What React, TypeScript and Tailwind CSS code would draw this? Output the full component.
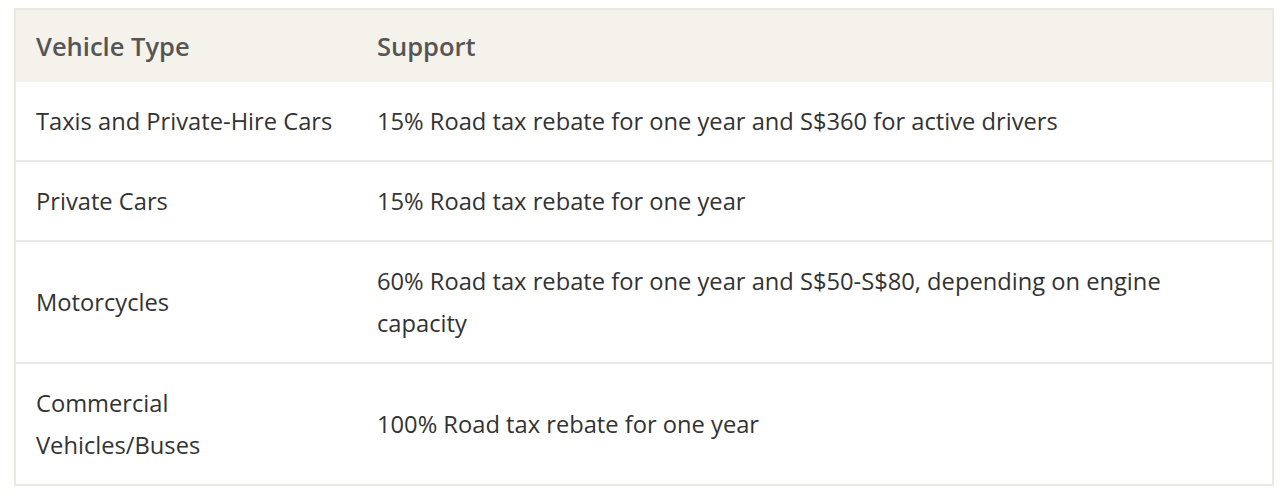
import React from "react";

type Row = {
  type: string;
  support: string;
};

const rows: Row[] = [
  {
    type: "Taxis and Private-Hire Cars",
    support: "15% Road tax rebate for one year and S$360 for active drivers",
  },
  { type: "Private Cars", support: "15% Road tax rebate for one year" },
  {
    type: "Motorcycles",
    support:
      "60% Road tax rebate for one year and S$50-S$80, depending on engine capacity",
  },
  {
    type: "Commercial Vehicles/Buses",
    support: "100% Road tax rebate for one year",
  },
];

function App() {
  return (
    <div className="min-h-[500px] bg-white pt-2 pl-[14px] font-['Open_Sans','Noto_Sans',sans-serif]">
      <table className="w-[1260px] border-separate border-spacing-0 border-2 border-[#ece9e1] text-[23.7px] leading-[42px] text-[#333333]">
        <colgroup>
          <col className="w-[341px]" />
          <col />
        </colgroup>
        <thead>
          <tr className="bg-[#f5f2eb]">
            <th className="pl-5 pr-[22px] py-[18px] text-left text-[25.5px] font-semibold leading-[36px] text-[#555555]">
              Vehicle Type
            </th>
            <th className="px-5 py-[18px] text-left text-[25.5px] font-semibold leading-[36px] text-[#555555]">
              Support
            </th>
          </tr>
        </thead>
        <tbody>
          {rows.map((row, i) => {
            const sep = i > 0 ? "border-t-2 border-[#e9e9e9]" : "";
            return (
              <tr key={row.type}>
                <td className={`pl-5 pr-[22px] py-[18px] align-middle ${sep}`}>
                  {row.type}
                </td>
                <td className={`px-5 py-[18px] align-middle ${sep}`}>
                  {row.support}
                </td>
              </tr>
            );
          })}
        </tbody>
      </table>
    </div>
  );
}

export default App;
